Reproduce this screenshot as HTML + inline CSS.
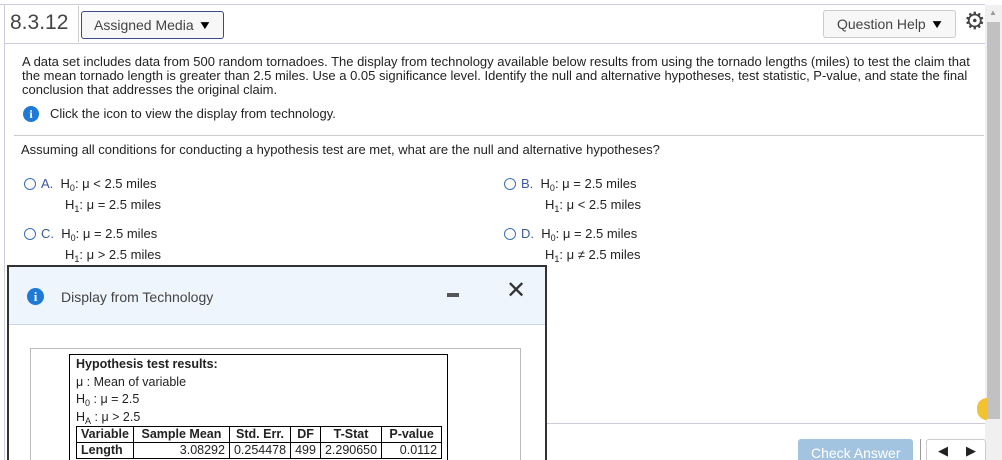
<!DOCTYPE html>
<html><head><style>
*{margin:0;padding:0;box-sizing:border-box}
html,body{width:1002px;height:460px;overflow:hidden}
body{background:#fff;font-family:"Liberation Sans",sans-serif;position:relative;color:#222}
.a{position:absolute}
.t{font-size:13px;line-height:14px}
sub{font-size:9px;vertical-align:-3px;line-height:0}
.rad{display:inline-block;width:12px;height:12px;border:1.5px solid #3b6fb6;border-radius:50%;vertical-align:-2px;margin-right:5px}
.lab{color:#3b5998;}
table{border-collapse:collapse;font-size:12.5px}
td{border:1px solid #000;padding:0 4px;line-height:15px}
</style></head><body>
<div class="a" style="left:0;top:4px;width:985px;height:1px;background:#ccd"></div>
<div class="a" style="left:4px;top:4px;width:1px;height:456px;background:#ccd"></div>
<div class="a" style="left:10px;top:11px;font-size:21px;color:#444">8.3.12</div>
<div class="a" style="left:78px;top:6px;width:1px;height:36px;background:#ccc"></div>
<div class="a" style="left:81px;top:11px;width:143px;height:28px;border:1px solid #3c4a8c;border-radius:3px;background:#f7f7f7;font-size:14px;color:#444;padding:5px 0 0 12px">Assigned Media <span style="font-size:15px;color:#000;display:inline-block;transform:scaleY(.8)">▼</span></div>
<div class="a" style="left:823px;top:10px;width:133px;height:28px;border:1px solid #ccc;border-radius:3px;background:#f7f7f7;font-size:14px;color:#444;padding:5px 0 0 13px">Question Help <span style="font-size:15px;color:#000;display:inline-block;transform:scaleY(.8)">▼</span></div>
<div class="a" style="left:964px;top:10px;font-size:24px;color:#444;line-height:24px">⚙</div>
<div class="a" style="left:5px;top:43px;width:980px;height:1px;background:#ccd"></div>
<div class="a" style="left:985px;top:5px;width:17px;height:455px;background:#f0f0f0"></div>
<div class="a" style="left:989px;top:9px;font-size:8px;color:#999;line-height:8px">▲</div>
<div class="a" style="left:987px;top:22px;width:13px;height:397px;background:#c1c1c1"></div>
<div class="a t" style="left:22px;top:55px;width:960px">A data set includes data from 500 random tornadoes. The display from technology available below results from using the tornado lengths (miles) to test the claim that the mean tornado length is greater than 2.5 miles. Use a 0.05 significance level. Identify the null and alternative hypotheses, test statistic, P-value, and state the final conclusion that addresses the original claim.</div>
<div class="a" style="left:23px;top:106px;width:16px;height:16px;border-radius:50%;background:#1e7ad6;color:#fff;font:bold 12px 'Liberation Serif',serif;text-align:center;line-height:16px">i</div>
<div class="a t" style="left:50px;top:107px">Click the icon to view the display from technology.</div>
<div class="a" style="left:14px;top:135px;width:970px;height:1px;background:#ccc"></div>
<div class="a t" style="left:21px;top:143px">Assuming all conditions for conducting a hypothesis test are met, what are the null and alternative hypotheses?</div>
<div class="a t" style="left:24px;top:177px"><span class="rad"></span><span class="lab">A.</span>&nbsp; H<sub>0</sub>: μ &lt; 2.5 miles</div>
<div class="a t" style="left:65px;top:198px">H<sub>1</sub>: μ = 2.5 miles</div>
<div class="a t" style="left:504px;top:177px"><span class="rad"></span><span class="lab">B.</span>&nbsp; H<sub>0</sub>: μ = 2.5 miles</div>
<div class="a t" style="left:545px;top:198px">H<sub>1</sub>: μ &lt; 2.5 miles</div>
<div class="a t" style="left:24px;top:227px"><span class="rad"></span><span class="lab">C.</span>&nbsp; H<sub>0</sub>: μ = 2.5 miles</div>
<div class="a t" style="left:65px;top:248px">H<sub>1</sub>: μ &gt; 2.5 miles</div>
<div class="a t" style="left:504px;top:227px"><span class="rad"></span><span class="lab">D.</span>&nbsp; H<sub>0</sub>: μ = 2.5 miles</div>
<div class="a t" style="left:545px;top:248px">H<sub>1</sub>: μ ≠ 2.5 miles</div>
<div class="a" style="left:546px;top:423px;width:439px;height:1px;background:#ccd"></div>
<div class="a" style="left:977px;top:398px;width:10px;height:22px;border-radius:10px 0 0 10px;background:#f2c230"></div>
<div class="a" style="left:798px;top:439px;width:115px;height:21px;background:#a3c4e0;border-radius:3px 3px 0 0;color:#fff;font-size:14px;line-height:14px;padding:7px 0 0 13px;overflow:hidden">Check Answer</div>
<div class="a" style="left:920px;top:439px;width:1px;height:21px;background:#999"></div>
<div class="a" style="left:926px;top:439px;width:60px;height:21px;border:1px solid #ccc;border-bottom:none;border-radius:3px 3px 0 0;background:#fff"></div>
<div class="a" style="left:938px;top:444px;font-size:13px;line-height:14px">◀</div>
<div class="a" style="left:966px;top:444px;font-size:13px;line-height:14px">▶</div>
<div class="a" style="left:7px;top:265px;width:540px;height:195px;border:2px solid #333;border-bottom:none;background:#fff;overflow:hidden">
 <div style="height:58px;background:#eef5fd;border-bottom:1px solid #c8d8e8;position:relative">
  <div class="a" style="left:18px;top:21px;width:17px;height:17px;border-radius:50%;background:#1e7ad6;color:#fff;font:bold 13px 'Liberation Serif',serif;text-align:center;line-height:17px">i</div>
  <div class="a" style="left:52px;top:22px;font-size:14px;color:#444">Display from Technology</div>
  <div class="a" style="left:438px;top:26px;width:12px;height:4px;background:#555"></div>
  <div class="a" style="left:497px;top:12px;font-size:24px;color:#333;line-height:24px">✕</div>
 </div>
 <div class="a" style="left:21px;top:81px;width:491px;height:112px;border:1px solid #bbb;border-bottom:none"></div>
 <div class="a" style="left:60px;top:87px;width:379px;height:106px;border:1px solid #000;border-bottom:none;padding:1px 0 0 6px;font-size:12.5px;line-height:17.5px;overflow:hidden">
  <b>Hypothesis test results:</b><br>μ : Mean of variable<br>H<sub>0</sub> : μ = 2.5<br>H<sub>A</sub> : μ &gt; 2.5
  <table style="margin-top:0">
   <tr style="font-weight:bold;text-align:center"><td>Variable</td><td>Sample Mean</td><td>Std. Err.</td><td>DF</td><td>T-Stat</td><td>P-value</td></tr>
   <tr><td><b>Length</b></td><td style="text-align:right;width:96px">3.08292</td><td>0.254478</td><td>499</td><td>2.290650</td><td style="text-align:right;width:60px">0.0112</td></tr>
  </table>
 </div>
</div>
</body></html>
